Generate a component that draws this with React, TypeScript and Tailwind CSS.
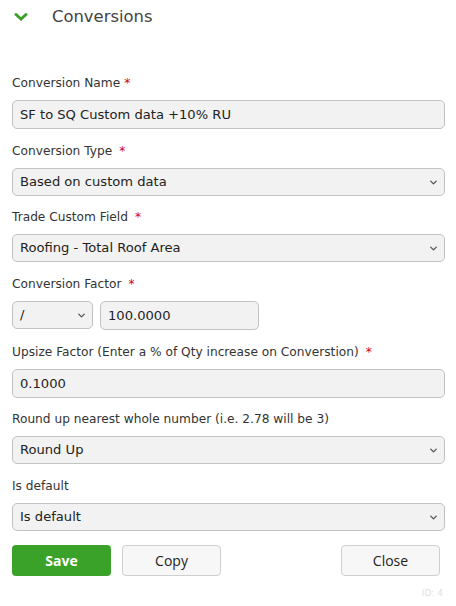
import { ChevronDown } from "lucide-react";

const font = { fontFamily: '"DejaVu Sans", Verdana, sans-serif' };

function Label({ text, req, gap }: { text: string; req?: boolean; gap?: boolean }) {
  return (
    <div className="h-4 mb-[9px] text-[12.2px] leading-4 text-[#333]">
      {text}
      {req && <span className={`text-[#d0021b] ${gap ? "ml-[7px]" : "ml-[4px]"}`}>*</span>}
    </div>
  );
}

function TextBox({ value, className = "" }: { value: string; className?: string }) {
  return (
    <div
      className={`h-[29px] flex items-center px-[7px] rounded-[5px] border border-[#c2c2c2] bg-[#f2f2f2] text-[13.1px] text-[#222] ${className}`}
    >
      {value}
    </div>
  );
}

function Select({ value, className = "" }: { value: string; className?: string }) {
  return (
    <div
      className={`h-[28px] flex items-center justify-between pl-[7px] pr-[5px] rounded-[5px] border border-[#c2c2c2] bg-[#f2f2f2] text-[13.1px] text-[#222] ${className}`}
    >
      <span>{value}</span>
      <ChevronDown className="size-[11px] text-[#555]" strokeWidth={3} />
    </div>
  );
}

export default function App() {
  return (
    <div className="w-[456px] h-[606px] bg-white relative" style={font}>
      <div className="flex items-center h-[35px] pl-[14px]">
        <svg width="14" height="10" viewBox="0 0 14 10" className="mt-[-2px]">
          <path d="M2 2.5 L7 7 L12 2.5" fill="none" stroke="#3c9f2a" strokeWidth="3" strokeLinecap="round" />
        </svg>
        <span className="ml-[24px] text-[16.4px] text-[#444]">Conversions</span>
      </div>

      <div className="pl-[12px] pr-[11px] pt-[40px]">
        <div className="mb-[14px]">
          <Label text="Conversion Name" req />
          <TextBox value="SF to SQ Custom data +10% RU" />
        </div>
        <div className="mb-[13px]">
          <Label text="Conversion Type" req gap />
          <Select value="Based on custom data" />
        </div>
        <div className="mb-[14px]">
          <Label text="Trade Custom Field" req gap />
          <Select value="Roofing - Total Roof Area" />
        </div>
        <div className="mb-[14px]">
          <Label text="Conversion Factor" req gap />
          <div className="flex gap-[7px]">
            <Select value="/" className="w-[81px]" />
            <TextBox value="100.0000" className="w-[159px] h-[28px]" />
          </div>
        </div>
        <div className="mb-[13px]">
          <Label text="Upsize Factor (Enter a % of Qty increase on Converstion)" req gap />
          <TextBox value="0.1000" />
        </div>
        <div className="mb-[14px]">
          <Label text="Round up nearest whole number (i.e. 2.78 will be 3)" />
          <Select value="Round Up" />
        </div>
        <div className="mb-[14px]">
          <Label text="Is default" />
          <Select value="Is default" />
        </div>

        <div className="flex items-center text-[14px]" style={{ fontFamily: '"Open Sans", sans-serif' }}>
          <button className="w-[99px] h-[31px] rounded-[4px] bg-[#3aa229] text-white font-bold">Save</button>
          <button className="ml-[11px] w-[99px] h-[31px] rounded-[4px] border border-[#cfcfcf] bg-[#f7f7f7] text-[#222]">
            Copy
          </button>
          <button className="ml-auto mr-[5px] w-[99px] h-[31px] rounded-[4px] border border-[#cfcfcf] bg-[#f7f7f7] text-[#222]">
            Close
          </button>
        </div>
        <div className="flex justify-end mt-[11px] pr-[2px] text-[9px] text-[#e2e2e2]">ID: 4</div>
      </div>
    </div>
  );
}
